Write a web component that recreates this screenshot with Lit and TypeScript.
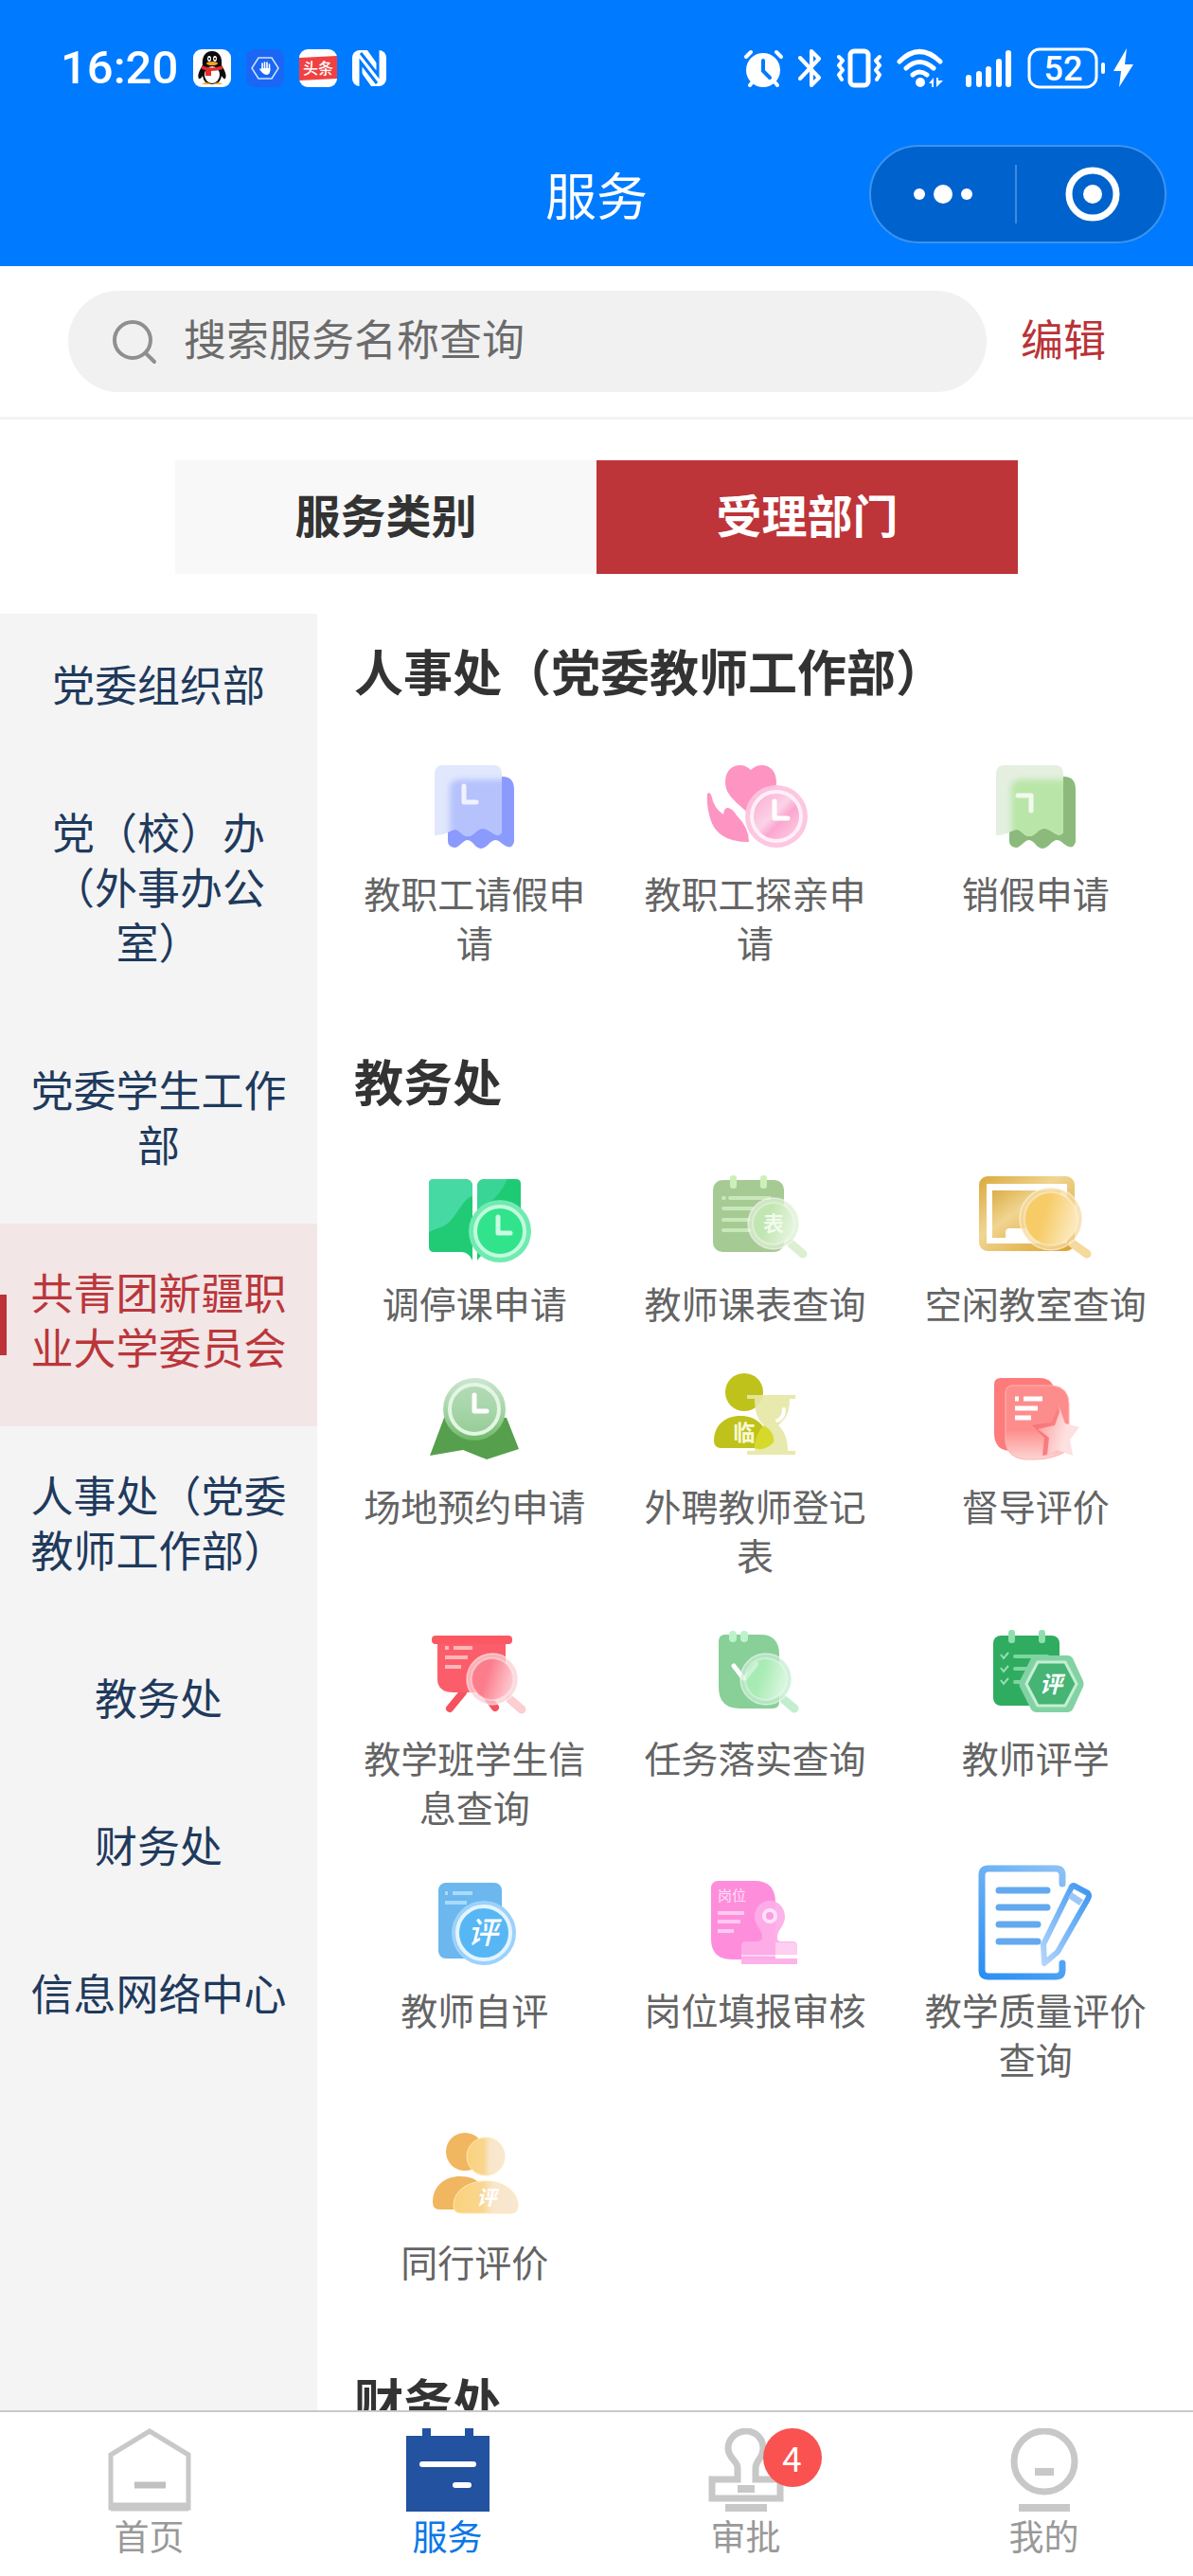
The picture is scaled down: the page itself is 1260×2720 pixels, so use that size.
import { LitElement, html, svg, css } from "lit";
import { customElement, property, state } from "lit/decorators.js";
import { classMap } from "lit/directives/class-map.js";

const magnifier = (cx: number, cy: number, r: number, hx: number, hy: number, tint: string, pale: string) => svg`
  <line x1=${cx + r * 0.7} y1=${cy + r * 0.8} x2=${hx} y2=${hy} stroke=${pale} stroke-width="9" stroke-linecap="round"></line>
  <circle cx=${cx} cy=${cy} r=${r} fill=${pale} fill-opacity="0.75"></circle>
  <circle cx=${cx} cy=${cy} r=${r - 5} fill=${tint}></circle>
  <circle cx=${cx} cy=${cy} r=${r - 5} fill="url(#shine)" stroke="#fff" stroke-opacity="0.35" stroke-width="2"></circle>
  <circle cx=${cx} cy=${cy} r=${r} fill="none" stroke="#fff" stroke-opacity="0.5" stroke-width="1.5"></circle>`;

const receipt = (back: string, mid: string, pale: string, hand: string) => svg`
  <defs>
    <clipPath id="glass"><path d="M18 25Q18 16 27 16H80Q89 16 89 25V87Q86 91 82 89C76 86 72 82 67 83S59 91 53 91S44 83 39 84S30 90 18 90Z"></path></clipPath>
    <filter id="soft" x="-20%" y="-20%" width="140%" height="140%"><feGaussianBlur stdDeviation="3"></feGaussianBlur></filter>
  </defs>
  <path d="M32 42Q32 28 46 28H90Q102 28 102 42V97Q100 104 95 102C89 100 87 95 82 95S73 104 67 104S58 95 53 95S44 103 39 103Q32 102 32 96Z" fill=${back}></path>
  <g clip-path="url(#glass)">
    <rect x="18" y="16" width="71" height="76" fill=${pale}></rect>
    <path d="M34 42Q34 31 44 31H100V105H34Z" fill=${mid} filter="url(#soft)"></path>
  </g>
  <path d=${hand} fill="none" stroke="#fff" stroke-opacity="0.8" stroke-width="5" stroke-linecap="round" stroke-linejoin="round"></path>`;

const ICONS: Record<string, () => unknown> = {
  leave: () => receipt("#8b9bfd", "#b5c2fc", "#e1e8fd", "M49 38V55H62"),
  cancel: () => receipt("#8cba7c", "#b9e6a8", "#e4efe0", "M41 48H55V64"),
  family: () => svg`
    <path d="M62 80C56 62 29 54 29 34C29 14 48 12 56 21C64 12 83 14 83 34C83 52 66 62 62 80Z" fill="#fd94c2"></path>
    <path d="M10 47Q11 43 14 47Q17 62 27 68Q28 60 32 61Q37 62 41 69Q54 82 54 97Q22 97 14 75Q9 60 10 47Z" fill="#fd94c2"></path>
    <circle cx="83" cy="70" r="33" fill="#fdc3df" fill-opacity="0.95"></circle>
    <circle cx="83" cy="70" r="26" fill="url(#pinkFace)" stroke="#fff0f8" stroke-width="4"></circle>
    <path d="M81 54V72H95" fill="none" stroke="#fff" stroke-width="5" stroke-linecap="round" stroke-linejoin="round"></path>`,
  reschedule: () => svg`
    <path d="M12 25Q12 20 17 20H50Q58 20 58 28V106Q54 97 46 97H17Q12 97 12 91Z" fill="#21cb76"></path>
    <path d="M12 25Q12 20 17 20H50Q58 20 58 28V38C48 40 40 62 30 68C24 72 18 72 12 76Z" fill="#47d9a4"></path>
    <path d="M63 28Q63 20 71 20H104Q109 20 109 25V97H78Q68 97 63 106Z" fill="#1fca74"></path>
    <path d="M63 28Q63 20 71 20H95Q84 44 63 52Z" fill="#39d596"></path>
    <circle cx="87" cy="75" r="33" fill="#6febb0"></circle>
    <circle cx="87" cy="75" r="26" fill="#31e48c" stroke="#c1fadd" stroke-width="4"></circle>
    <path d="M85 60V77H98" fill="none" stroke="#c8fbe2" stroke-width="5" stroke-linecap="round" stroke-linejoin="round"></path>`,
  timetable: () => svg`
    <rect x="16" y="21" width="75" height="76" rx="10" fill="#a6ca93"></rect>
    <rect x="34" y="16" width="7" height="14" rx="3" fill="#cdf0ba"></rect>
    <rect x="66" y="16" width="7" height="14" rx="3" fill="#cdf0ba"></rect>
    <g stroke="#c9e8ba" stroke-width="4" stroke-linecap="round"><path d="M27 40H28M34 40H76M27 51H58M27 63H54M27 74H55"></path></g>
    ${magnifier(80, 67, 27, 111, 99, "#bfe5ae", "#dcefd3")}
    <text x="80" y="75" font-size="22" font-weight="700" text-anchor="middle" fill="#f2fbec">表</text>`,
  classroom: () => svg`
    <rect x="4" y="21" width="93" height="71" rx="5" fill="#fff" stroke="url(#gold)" stroke-width="8"></rect>
    <rect x="14" y="32" width="72" height="50" fill="url(#gold)"></rect>
    <path d="M28 88V76Q28 72 33 72H55Q59 72 59 76V88Z" fill="#fff"></path>
    ${magnifier(76, 62, 33, 114, 99, "#f7c95f", "#f6d99c")}`,
  venue: () => svg`
    <path d="M28 58H94L107 91L73 102L48 92L13 98Z" fill="#559f4d"></path>
    <circle cx="60" cy="49" r="33" fill="url(#medal)"></circle>
    <circle cx="60" cy="49" r="26" fill="#a9d6aa" fill-opacity="0.6" stroke="#e2f6e3" stroke-width="4"></circle>
    <path d="M60 34V51H73" fill="none" stroke="#fff" stroke-width="5" stroke-linecap="round" stroke-linejoin="round"></path>`,
  external: () => svg`
    <circle cx="49" cy="31" r="20" fill="#c0c21c"></circle>
    <path d="M17 82C17 66 29 56 45 56S73 66 73 82Q73 90 66 90H25Q17 90 17 82Z" fill="#c0c21c"></path>
    <text x="49" y="82" font-size="23" font-weight="700" text-anchor="middle" fill="#f8f9d6">临</text>
    <path d="M52 34H103V38H97C97 54 92 60 85 66C92 72 95 82 95 93H103V97H52V93H60C60 82 64 73 70 66C63 60 60 52 60 38H52Z" fill="#e6e7a5" fill-opacity="0.92"></path>
    <path d="M70 66C63 73 60 82 60 90Q70 94 80 84Q82 74 70 66Z" fill="#d6d92c"></path>
    <path d="M91 49Q91 58 84 61" fill="none" stroke="#fff" stroke-width="4" stroke-linecap="round"></path>`,
  supervise: () => svg`
    <path d="M16 23Q16 16 23 16H64Q80 16 80 34V93H34Q16 93 16 74Z" fill="#fd7b7b"></path>
    <path d="M28 32Q28 24 36 24H78Q95 26 95 44V92Q78 102 60 102H48Q30 100 28 84Z" fill="url(#redGlass)" stroke="#ffb4b2" stroke-width="1"></path>
    <path d="M84 45L91 64L106 68L96 81L99 98L82 92L70 98L72 78L56 68L76 63Z" fill="url(#star)"></path>
    <path d="M84 45L76 63L56 66L69 79L67 98L72 97L74 79L62 70L80 66L85 52Z" fill="#f7686c" fill-opacity="0.75"></path>
    <g stroke="#fff" stroke-width="5"><path d="M38 38H42M47 38H67M38 48H62M38 58H55"></path></g>`,
  students: () => svg`
    <path d="M48 82L34 99M70 82L82 98" stroke="#f5525f" stroke-width="8" stroke-linecap="round"></path>
    <path d="M21 28H93V82H38Q21 82 21 68Z" fill="#fb5e6a"></path>
    <rect x="15" y="22" width="85" height="9" rx="4" fill="#fb5864"></rect>
    <g stroke="#ffb6b8" stroke-width="4"><path d="M29 35H33M38 35H58M29 45H53M29 55H46"></path></g>
    ${magnifier(79, 68, 27, 110, 100, "#fb7686", "#fbcfd1")}`,
  tasks: () => svg`
    <path d="M22 28Q22 21 29 21H66Q86 21 86 42V92Q86 99 79 99H44Q22 99 22 76Z" fill="#88cf98"></path>
    <rect x="33" y="17" width="8" height="12" rx="4" fill="#bdf3ca"></rect>
    <rect x="45" y="17" width="8" height="12" rx="4" fill="#bdf3ca"></rect>
    <path d="M38 54L48 67" stroke="#fff" stroke-width="5" stroke-linecap="round"></path>
    ${magnifier(72, 68, 27, 102, 99, "#a3eab0", "#c3edcf")}
    <path d="M50 67L62 52" stroke="#fff" stroke-opacity="0.4" stroke-width="5" stroke-linecap="round"></path>`,
  rateStudy: () => svg`
    <rect x="15" y="22" width="70" height="74" rx="8" fill="#2fac60"></rect>
    <rect x="31" y="16" width="7" height="14" rx="3" fill="#8fdfae"></rect>
    <rect x="63" y="16" width="7" height="14" rx="3" fill="#8fdfae"></rect>
    <path d="M23 42L26 46L31 40M23 56L26 60L31 54M23 69L26 73L31 67" fill="none" stroke="#95e0b2" stroke-width="2"></path>
    <path d="M38 44H72M38 57H56M38 71H50" stroke="#7dd79f" stroke-width="4" stroke-linecap="round"></path>
    <path d="M60 43H94Q97 43 99 46L110 70Q111 73 110 76L99 100Q97 103 94 103H60Q57 103 55 100L43 76Q42 73 43 70L55 46Q57 43 60 43Z" fill="#83d2a4"></path>
    <path d="M62 50H91L103 73L91 96H62L50 73Z" fill="#45b475" stroke="#c3efd2" stroke-width="3" stroke-linejoin="round"></path>
    <text x="76" y="82" font-size="24" font-weight="700" font-style="italic" text-anchor="middle" fill="#fff">评</text>`,
  rateSelf: () => svg`
    <rect x="22" y="17" width="67" height="80" rx="8" fill="#6bb7ee"></rect>
    <path d="M29 28H32M37 28H58M29 38H52" stroke="#a9dafd" stroke-width="4"></path>
    <circle cx="70" cy="70" r="34" fill="#9bd2fb"></circle>
    <circle cx="70" cy="70" r="28" fill="#57b7f5" stroke="#e4f4ff" stroke-width="4"></circle>
    <text x="69" y="81" font-size="32" font-weight="500" font-style="italic" text-anchor="middle" fill="#fff">评</text>`,
  post: () => svg`
    <path d="M14 23Q14 15 22 15H60Q82 15 82 38V98H36Q14 98 14 76Z" fill="#fe8edc"></path>
    <text x="21" y="36" font-size="15" fill="#ffe0f7">岗位</text>
    <path d="M21 49H49M21 58H45M21 68H38" stroke="#ffc9f0" stroke-width="4"></path>
    <path d="M76 36C86 36 92 44 92 53C92 62 84 67 84 75Q84 79 88 79H100Q105 79 105 84V103H46V84Q46 79 51 79H62Q68 79 68 74C68 66 60 62 60 53C60 44 66 36 76 36Z" fill="#fdaee8" fill-opacity="0.95"></path>
    <path d="M82 80H100Q105 80 105 85V94H82Z" fill="#fdcff1"></path>
    <path d="M46 94H82" stroke="#fdd3f2" stroke-width="2"></path>
    <path d="M82 95H105" stroke="#fff" stroke-width="4"></path>
    <circle cx="76" cy="52" r="6" fill="#fd9ae2" stroke="#fde3f6" stroke-width="4"></circle>`,
  quality: () => svg`
    <path d="M88 18V9Q88 2 81 2H10Q3 2 3 9V109Q3 116 10 116H81Q88 116 88 109V102" fill="none" stroke="url(#sky)" stroke-width="7" stroke-linecap="round"></path>
    <path d="M21 25H72M21 43H72M21 61H62M21 79H62" stroke="#64a9ef" stroke-width="7" stroke-linecap="round"></path>
    <path d="M100 20L115 28Q117 30 115 34L83 90L69 102L68 82L97 23Q98 20 100 20Z" fill="#fff" stroke="url(#pen)" stroke-width="6" stroke-linejoin="round"></path>
    <path d="M96 30L108 38" stroke="#9cc8f7" stroke-width="7"></path>`,
  peer: () => svg`
    <circle cx="50" cy="35" r="20" fill="#f0b660"></circle>
    <path d="M16 88C16 71 29 61 45 61S76 70 78 96H23Q16 96 16 88Z" fill="#f0b660"></path>
    <circle cx="72" cy="40" r="20" fill="url(#peach)" stroke="#ffe9b8" stroke-width="1"></circle>
    <path d="M38 92C38 75 55 66 72 66S106 76 106 92Q106 100 98 100H46Q38 100 38 92Z" fill="url(#peach)" stroke="#ffe9b8" stroke-width="1"></path>
    <text x="73" y="91" font-size="21" font-weight="700" font-style="italic" text-anchor="middle" fill="#fff">评</text>`,
};

@customElement("service-icon")
export class ServiceIcon extends LitElement {
  @property() name = "";

  static styles = css`
    :host { display: block; width: 120px; height: 120px; }
    .art { display: block; width: 100%; height: 100%; overflow: visible; font-family: "Noto Sans CJK SC", sans-serif; }
  `;

  render() {
    return html`<svg class="art" viewBox="0 0 120 120" aria-hidden="true">
      <defs>
        <linearGradient id="shine" x1="0" y1="0" x2="1" y2="0.3">
          <stop offset="0.45" stop-color="#fff" stop-opacity="0.05"></stop><stop offset="1" stop-color="#fff" stop-opacity="0.55"></stop>
        </linearGradient>
        <linearGradient id="pinkFace" x1="0" y1="0" x2="1" y2="1">
          <stop offset="0" stop-color="#fda6cf"></stop><stop offset="0.45" stop-color="#fbd3e6"></stop><stop offset="0.6" stop-color="#fba6cf"></stop><stop offset="1" stop-color="#fcd9e9"></stop>
        </linearGradient>
        <linearGradient id="gold" x1="0" y1="0" x2="1" y2="1">
          <stop offset="0" stop-color="#dcae47"></stop><stop offset="0.4" stop-color="#f0d591"></stop><stop offset="1" stop-color="#dda430"></stop>
        </linearGradient>
        <linearGradient id="medal" x1="0" y1="0" x2="0" y2="1">
          <stop offset="0" stop-color="#cde5d2"></stop><stop offset="0.5" stop-color="#a6d6a9"></stop><stop offset="1" stop-color="#6fb868"></stop>
        </linearGradient>
        <linearGradient id="redGlass" x1="0" y1="0" x2="0" y2="1">
          <stop offset="0.6" stop-color="#fd8d8c"></stop><stop offset="1" stop-color="#fdd5d3"></stop>
        </linearGradient>
        <linearGradient id="star" x1="0" y1="0" x2="1" y2="0.3">
          <stop offset="0.2" stop-color="#fca09f"></stop><stop offset="0.8" stop-color="#fde0df"></stop>
        </linearGradient>
        <linearGradient id="sky" gradientUnits="userSpaceOnUse" x1="90" y1="0" x2="10" y2="120">
          <stop offset="0" stop-color="#8fc2f5"></stop><stop offset="1" stop-color="#2a8ff3"></stop>
        </linearGradient>
        <linearGradient id="pen" x1="1" y1="0" x2="0" y2="1">
          <stop offset="0" stop-color="#3c95f0"></stop><stop offset="1" stop-color="#b2d5fb"></stop>
        </linearGradient>
        <linearGradient id="peach" x1="0" y1="0" x2="1" y2="0">
          <stop offset="0" stop-color="#fbd27c"></stop><stop offset="0.45" stop-color="#f9d68f"></stop><stop offset="0.6" stop-color="#f9e5c9"></stop><stop offset="1" stop-color="#f8e8d3"></stop>
        </linearGradient>
      </defs>
      ${ICONS[this.name]?.()}
    </svg>`;
  }
}

const DEPARTMENTS = [
  "党委组织部",
  "党（校）办（外事办公室）",
  "党委学生工作部",
  "共青团新疆职业大学委员会",
  "人事处（党委教师工作部）",
  "教务处",
  "财务处",
  "信息网络中心",
];

const SECTIONS: { title: string; items: [string, string][] }[] = [
  {
    title: "人事处（党委教师工作部）",
    items: [["leave", "教职工请假申请"], ["family", "教职工探亲申请"], ["cancel", "销假申请"]],
  },
  {
    title: "教务处",
    items: [
      ["reschedule", "调停课申请"], ["timetable", "教师课表查询"], ["classroom", "空闲教室查询"],
      ["venue", "场地预约申请"], ["external", "外聘教师登记表"], ["supervise", "督导评价"],
      ["students", "教学班学生信息查询"], ["tasks", "任务落实查询"], ["rateStudy", "教师评学"],
      ["rateSelf", "教师自评"], ["post", "岗位填报审核"], ["quality", "教学质量评价查询"],
      ["peer", "同行评价"],
    ],
  },
  { title: "财务处", items: [] },
];

const NAV = [
  { label: "首页", badge: 0, icon: svg`
    <path d="M3 28L44 3L85 28V84H3Z" fill="none" stroke="#c8c8c8" stroke-width="5"></path>
    <path d="M3 83H85" stroke="#c8c8c8" stroke-width="9"></path>
    <path d="M28 60H61" stroke="#c0c0c0" stroke-width="7"></path>` },
  { label: "服务", badge: 0, icon: svg`
    <path d="M0 8H17V0H26V8H62V0H71V8H88V88H0Z" fill="#2252a0"></path>
    <path d="M17 38H71M52 60H66" stroke="#fff" stroke-width="6" stroke-linecap="round"></path>` },
  { label: "审批", badge: 4, icon: svg`
    <path d="M44 3C55 3 62 12 62 21C62 32 54 34 54 42V54H80V74H8V54H35V42C35 34 25 32 25 21C25 12 33 3 44 3Z" fill="none" stroke="#c8c8c8" stroke-width="7"></path>
    <path d="M35 64H53M22 84H66" stroke="#c8c8c8" stroke-width="8"></path>` },
  { label: "我的", badge: 0, icon: svg`
    <circle cx="44" cy="35" r="32" fill="none" stroke="#c8c8c8" stroke-width="7"></circle>
    <path d="M34 46H54M17 84H71" stroke="#c8c8c8" stroke-width="8"></path>` },
];

@customElement("app-root")
export class AppRoot extends LitElement {
  @state() private tab = 1;
  @state() private department = 3;
  @state() private page = 1;

  static styles = css`
    :host {
      display: flex;
      flex-direction: column;
      height: 100vh;
      background: #fff;
      color: #333;
      font-family: "Noto Sans CJK SC", sans-serif;
      text-spacing-trim: space-all;
    }
    * { box-sizing: border-box; }
    button, input { font: inherit; color: inherit; border: 0; background: none; padding: 0; margin: 0; }
    a { color: inherit; text-decoration: none; }
    svg { display: block; }
    ul { list-style: none; margin: 0; padding: 0; }

    .header { background: #007aff; color: #fff; }
    .status { display: flex; justify-content: space-between; height: 130px; padding: 14px 62px 0 64px; }
    .group { display: flex; align-items: center; gap: 16px; }
    .time { font: 500 49px/60px Roboto, sans-serif; }
    .bar { display: grid; grid-template-columns: 1fr auto 1fr; align-items: center; height: 151px; padding: 0 28px 2px; }
    .title { grid-column: 2; margin: 0; font-size: 54px; line-height: 72px; font-weight: 400; }
    .capsule {
      justify-self: end; display: flex; align-items: center; width: 314px; height: 104px;
      border: 2px solid #3c93ef; border-radius: 52px; background: #0062cc;
    }
    .capsule button { flex: 1; display: grid; place-items: center; }
    .capsule button:last-child { padding-left: 4px; }
    .rule { width: 2px; height: 62px; background: #3c8be0; }

    .search { display: flex; align-items: center; gap: 36px; padding: 26px 92px 26px 72px; border-bottom: 3px solid #f4f4f4; }
    .pill { flex: 1; display: flex; align-items: center; gap: 28px; height: 107px; padding: 0 46px; border-radius: 54px; background: #f1f1f1; }
    .query { flex: 1; min-width: 0; height: 66px; font-size: 45px; outline: none; padding-bottom: 8px; }
    .query::placeholder { color: #6b6b6b; opacity: 1; }
    .edit { color: #b93338; font-size: 45px; line-height: 66px; padding-bottom: 8px; }

    .tabs { display: flex; padding: 43px 185px 42px; }
    .tab { flex: 1; height: 120px; padding-bottom: 8px; background: #f8f8f8; font-size: 48px; font-weight: 700; }
    .tab.on { background: #bd3439; color: #fff; }

    .body { flex: 1; min-height: 0; display: flex; overflow: hidden; }
    .side { width: 335px; flex: none; padding-top: 2px; background: #f4f4f5; }
    .dept { position: relative; display: block; width: 100%; padding: 43px 30px 55px; font-size: 45px; line-height: 58px; text-align: center; color: #1f3a5c; }
    .dept.on { background: #f2e6e6; color: #ba363b; }
    .dept.on::before { content: ""; position: absolute; left: 0; top: 50%; width: 7px; height: 64px; margin-top: -32px; background: #be3239; }

    .content { flex: 1; min-width: 0; display: flex; flex-direction: column; gap: 53px; padding: 30px 18px 0; overflow: hidden; }
    .heading { margin: 0 0 54px 21px; font-size: 52px; line-height: 60px; font-weight: 700; }
    .grid { display: grid; grid-template-columns: repeat(3, 1fr); }
    .service { display: flex; flex-direction: column; align-items: center; gap: 4px; padding: 0 20px 38px; font-size: 39px; line-height: 52px; text-align: center; color: #646464; }

    .nav { display: grid; grid-template-columns: repeat(4, 1fr); border-top: 2px solid #c9c9c9; background: #fff; }
    .link { display: flex; flex-direction: column; align-items: center; padding: 17px 0 15px; font-size: 37px; line-height: 55px; color: #999; }
    .link.on { color: #0a78e6; }
    .glyph { position: relative; width: 88px; height: 88px; margin-bottom: -2px; }
    .badge { position: absolute; left: 62px; top: 0; width: 62px; height: 62px; border-radius: 31px; background: #fa5151; color: #fff; line-height: 60px; text-align: center; }
  `;

  private renderStatus() {
    return html`<div class="status">
      <div class="group">
        <span class="time">16:20</span>
        <svg width="40" height="40" viewBox="0 0 40 40" role="img" aria-label="QQ">
          <rect width="40" height="40" rx="9" fill="#fff"></rect>
          <path d="M20 2C12 2 9 9 10 17C7 22 4 27 6 31C7 32 9 30 10 28C11 34 14 37 20 37S29 34 30 28C31 30 33 32 34 31C36 27 33 22 30 17C31 9 28 2 20 2Z" fill="#0b0b0b"></path>
          <ellipse cx="20" cy="27" rx="8" ry="9" fill="#fff"></ellipse>
          <ellipse cx="17" cy="10" rx="2" ry="3" fill="#fff"></ellipse><ellipse cx="23" cy="10" rx="2" ry="3" fill="#fff"></ellipse>
          <circle cx="17" cy="10" r="1"></circle><circle cx="23" cy="10" r="1"></circle>
          <ellipse cx="20" cy="15" rx="6" ry="2" fill="#f5a623"></ellipse>
          <path d="M9 17Q20 22 31 17V21Q25 23 19 23V28H13V22L9 21Z" fill="#e62b2b"></path>
          <path d="M9 37Q14 33 19 37ZM21 37Q26 33 31 37Z" fill="#f5a623"></path>
        </svg>
        <svg width="40" height="40" viewBox="0 0 40 40" aria-hidden="true">
          <rect width="40" height="40" rx="9" fill="#1b66f4"></rect>
          <path d="M13 9H27L34 20L27 31H13L6 20Z" fill="none" stroke="#cfe4ff" stroke-width="1.5"></path>
          <path d="M17 15V21M19.5 14V21M22 14V21M24.500 16V22" stroke="#fff" stroke-width="1.6" stroke-linecap="round"></path>
          <path d="M16 20H25.300V23Q25 27 21 27Q17 26 14 21Q15 19 17 22Z" fill="#fff"></path>
        </svg>
        <svg width="40" height="40" viewBox="0 0 40 40" role="img" aria-label="头条">
          <rect width="40" height="40" rx="9" fill="#fff"></rect>
          <path d="M0 9L40 7V31L0 33Z" fill="#f04142"></path>
          <text x="20" y="26" font-size="16" font-weight="500" text-anchor="middle" fill="#fff">头条</text>
        </svg>
        <svg width="36" height="38" viewBox="0 0 36 38" aria-hidden="true">
          <rect width="36" height="38" rx="8" fill="#fff"></rect>
          <path d="M9 38V13L26 35M27 0V26L9 3" fill="none" stroke="#007aff" stroke-width="3"></path>
          <path d="M10 24V38H20ZM26 14V0H16Z" fill="#007aff"></path>
        </svg>
      </div>
      <div class="group">
        <svg width="41" height="42" viewBox="0 0 41 42" fill="none" stroke="#fff" stroke-width="4" stroke-linecap="round" aria-hidden="true">
          <circle cx="20" cy="23" r="18" fill="#fff" stroke="none"></circle>
          <path d="M2 9L7 4M39 9L34 4M6 39L10 34M35 39L31 34"></path>
          <path d="M20 13V24L27 31" stroke="#007aff"></path>
        </svg>
        <svg width="25" height="42" viewBox="0 0 25 42" fill="none" stroke="#fff" stroke-width="4" stroke-linecap="round" stroke-linejoin="round" aria-hidden="true">
          <path d="M2 10L22 31L14 39V3L22 11L2 32"></path>
        </svg>
        <svg width="47" height="42" viewBox="0 0 47 42" fill="none" stroke="#fff" stroke-width="5" stroke-linecap="round" stroke-linejoin="round" aria-hidden="true">
          <rect x="14" y="3" width="19" height="36" rx="4"></rect>
          <path d="M2 9L6 13L2 18L6 23L2 28L5 33M45 9L41 13L45 18L41 23L45 28L42 33" stroke-width="4"></path>
        </svg>
        <svg width="49" height="42" viewBox="0 0 49 42" fill="none" stroke="#fff" stroke-width="5" stroke-linecap="round" aria-hidden="true">
          <path d="M3 14Q24 -7 46 14M10 21Q24 8 39 21M17 28Q24 22 32 28"></path>
          <circle cx="25" cy="36" r="5" fill="#fff" stroke="none"></circle>
          <path d="M34 37L39 31V41H37V37ZM42 31V41L49 34H44V31Z" fill="#fff" stroke="none"></path>
        </svg>
        <svg width="57" height="42" viewBox="0 0 57 42" stroke="#fff" stroke-width="6" stroke-linecap="round" aria-hidden="true">
          <path d="M11 31V38M22 27V38M32 22V38M43 14V38M53 5V38"></path>
        </svg>
        <svg width="113" height="44" viewBox="0 0 113 44" role="img" aria-label="52%">
          <rect x="2" y="2" width="71" height="40" rx="11" fill="none" stroke="#fff" stroke-width="3"></rect>
          <path d="M80 18V26" stroke="#fff" stroke-width="4" stroke-linecap="round"></path>
          <path d="M105 1L91 25H99L97 42L112 18H103Z" fill="#fff"></path>
          <text x="38" y="35" font-family="Roboto, sans-serif" font-size="36" font-weight="500" text-anchor="middle" fill="#fff">52</text>
        </svg>
      </div>
    </div>`;
  }

  render() {
    return html`
      <header class="header">
        ${this.renderStatus()}
        <div class="bar">
          <h1 class="title">服务</h1>
          <div class="capsule">
            <button type="button" aria-label="更多">
              <svg width="62" height="20" viewBox="0 0 62 20" fill="#fff"><circle cx="6" cy="10" r="6"></circle><circle cx="31" cy="10" r="10"></circle><circle cx="56" cy="10" r="6"></circle></svg>
            </button>
            <span class="rule"></span>
            <button type="button" aria-label="关闭">
              <svg width="58" height="58" viewBox="0 0 58 58"><circle cx="29" cy="29" r="25" fill="none" stroke="#fff" stroke-width="7"></circle><circle cx="29" cy="29" r="10" fill="#fff"></circle></svg>
            </button>
          </div>
        </div>
      </header>

      <form class="search" @submit=${(e: Event) => e.preventDefault()}>
        <label class="pill">
          <svg width="48" height="48" viewBox="0 0 48 48" fill="none" stroke="#8f8f8f" stroke-width="4" stroke-linecap="round" aria-hidden="true"><circle cx="22" cy="22" r="19"></circle><path d="M36 36L45 45"></path></svg>
          <input class="query" type="text" aria-label="搜索服务名称查询" placeholder="搜索服务名称查询" />
        </label>
        <button class="edit" type="button">编辑</button>
      </form>

      <div class="tabs" role="tablist">
        ${["服务类别", "受理部门"].map((label, i) => html`<button type="button" role="tab" aria-selected=${this.tab === i}
          class=${classMap({ tab: true, on: this.tab === i })} @click=${() => (this.tab = i)}>${label}</button>`)}
      </div>

      <main class="body">
        <nav class="side">
          ${DEPARTMENTS.map((name, i) => html`<button type="button"
            class=${classMap({ dept: true, on: this.department === i })} @click=${() => (this.department = i)}>${name}</button>`)}
        </nav>
        <div class="content">
          ${SECTIONS.map((s) => html`<section>
            <h2 class="heading">${s.title}</h2>
            <ul class="grid">
              ${s.items.map(([icon, label]) => html`<li><a class="service" href="#${icon}"><service-icon name=${icon}></service-icon><span>${label}</span></a></li>`)}
            </ul>
          </section>`)}
        </div>
      </main>

      <nav class="nav">
        ${NAV.map((n, i) => html`<a href="#" class=${classMap({ link: true, on: this.page === i })}
          @click=${(e: Event) => { e.preventDefault(); this.page = i; }}>
          <span class="glyph">
            <svg width="88" height="88" viewBox="0 0 88 88" aria-hidden="true">${n.icon}</svg>
            ${n.badge ? html`<span class="badge">${n.badge}</span>` : ""}
          </span>
          <span>${n.label}</span>
        </a>`)}
      </nav>
    `;
  }
}
